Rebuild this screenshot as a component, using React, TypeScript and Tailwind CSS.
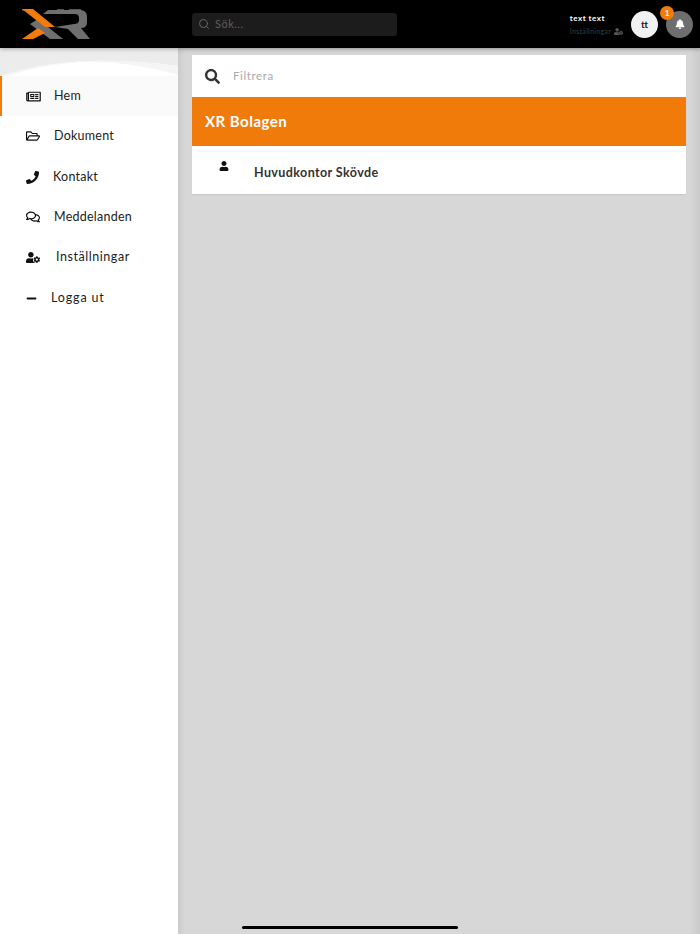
import { Search } from 'lucide-react';
import {
  FaBell,
  FaMinus,
  FaPhone,
  FaRegComments,
  FaRegFolderOpen,
  FaRegNewspaper,
  FaSearch,
  FaUser,
  FaUserCog,
} from 'react-icons/fa';

const font = "font-['Lato','Noto_Sans',sans-serif]";

function Logo() {
  // coordinates are page pixels, shifted by the viewBox origin
  return (
    <svg width="72" height="32" viewBox="20 8 72 32" className="block">
      <rect x="22" y="9" width="8" height="1.5" fill="#a85a12" />
      <rect x="57" y="9" width="7" height="1.5" fill="#555555" />
      <rect x="69" y="9" width="12" height="1.5" fill="#555555" />
      <polygon points="30,24 38,19 63,39 50,39" fill="#6f6f6f" />
      <polygon points="22,9 33,9 55,27 45,27" fill="#f27c0a" />
      <polygon points="22,39 38,28 45,33 33,39" fill="#f27c0a" />
      <path
        d="M43,14 L48,10 H80 Q87,10 87,17 V22 Q87,28 81,28 L90,39 H78 L68,29 L55,27 L74,24 Q79,24 79,20 V18 Q79,14 75,14 Z"
        fill="#6f6f6f"
      />
    </svg>
  );
}

function Header() {
  return (
    <header className="z-10 flex h-12 shrink-0 items-center bg-black shadow-[0_1px_4px_rgba(0,0,0,0.3)]">
      <div className="flex h-full w-[192px] shrink-0 items-start pt-[8px] pl-[20px]">
        <Logo />
      </div>
      <div className="flex h-[23px] w-[205px] items-center gap-[5px] rounded-[3px] bg-[#1c1c1c] pl-[6px]">
        <Search className="h-[12px] w-[12px] text-[#666666]" />
        <span className="text-[11px] tracking-[0.5px] text-[#5f5f5f]">Sök...</span>
      </div>
      <div className="ml-auto flex flex-col items-start pt-[1px]">
        <span className="text-[8px] leading-[12px] font-bold tracking-[0.5px] text-white">text text</span>
        <span className="mt-[1px] flex items-center gap-[3px] text-[7px] leading-[12px] tracking-[0.3px] text-[#3d3d3d]">
          Inställningar <FaUserCog className="h-[9px] w-[9px] text-[#555555]" />
        </span>
      </div>
      <div className="ml-[8px] flex h-[27px] w-[27px] items-center justify-center rounded-full bg-[#f1f1f1] text-[10px] font-bold text-[#222222]">
        tt
      </div>
      <div className="relative mr-[7px] ml-[8px] flex h-[27px] w-[27px] items-center justify-center rounded-full bg-[#6e6e6e]">
        <FaBell className="h-[10px] w-[10px] text-white" />
        <span className="absolute -top-[5px] -left-[6px] flex h-[14px] w-[14px] items-center justify-center rounded-full bg-[#f27c0a] text-[8px] font-bold text-white">
          1
        </span>
      </div>
    </header>
  );
}

const items = [
  { label: 'Dokument', icon: <FaRegFolderOpen className="h-[14px] w-[14px]" />, textClass: 'ml-[14px] tracking-[0.25px]', rowClass: '' },
  { label: 'Kontakt', icon: <FaPhone className="h-[13px] w-[13px]" />, textClass: 'ml-[13px] tracking-[0.25px]', rowClass: 'pt-[1px]' },
  { label: 'Meddelanden', icon: <FaRegComments className="h-[14px] w-[14px]" />, textClass: 'ml-[14px] tracking-[0.25px]', rowClass: '' },
  { label: 'Inställningar', icon: <FaUserCog className="h-[13px] w-[16px]" />, textClass: 'ml-[16px] tracking-[0.55px]', rowClass: '' },
  { label: 'Logga ut', icon: <FaMinus className="h-[11px] w-[11px]" />, textClass: 'ml-[11px] tracking-[0.85px]', rowClass: 'pt-[1px]' },
];

function Sidebar() {
  return (
    <aside className="flex w-[178px] shrink-0 flex-col bg-white">
      <svg viewBox="0 0 178 28" width="178" height="28" className="block">
        <path d="M0,0 H178 V18 Q135,12 85,13 Q40,15 0,28 Z" fill="#ececec" />
        <path d="M0,28 Q40,15 85,13 Q135,12 178,18 V27 Q135,14 90,14 Q40,15 0,31 Z" fill="#f5f5f5" />
      </svg>
      <div className="flex h-[40px] items-center border-l-[2px] border-[#f27c0a] bg-[#fafafa] pl-[24px] text-[12.5px] tracking-[0.25px] text-[#222222]">
        <FaRegNewspaper className="h-[13px] w-[15px] text-[#111111]" />
        <span className="ml-[13px]">Hem</span>
      </div>
      {items.map((item) => (
        <div key={item.label} className={`flex h-[40.4px] items-center pl-[26px] text-[12.5px] text-[#222222] ${item.rowClass}`}>
          <span className="flex w-[14px] items-center text-[#111111]">{item.icon}</span>
          <span className={item.textClass}>{item.label}</span>
        </div>
      ))}
    </aside>
  );
}

function Main() {
  return (
    <main className="relative min-w-0 flex-1 bg-[#d7d7d7] pt-[7px] pr-[14px] pl-[14px] shadow-[inset_6px_3px_6px_-4px_rgba(0,0,0,0.08)]">
      <div className="absolute top-0 right-0 bottom-0 w-[10px] bg-gradient-to-r from-transparent to-[#c9c9c9]" />
      <div className="relative bg-white shadow-[0_1px_1px_rgba(0,0,0,0.06)]">
        <div className="flex h-[42px] items-center pl-[13px]">
          <FaSearch className="h-[15px] w-[15px] text-[#333333]" />
          <span className="ml-[13px] text-[11.5px] tracking-[0.6px] text-[#aaaaaa]">Filtrera</span>
        </div>
        <div className="flex h-[49px] items-center bg-[#f07b0b] pl-[13px] text-[15px] font-bold tracking-[0.5px] text-white">
          XR Bolagen
        </div>
        <div className="h-[48px] pt-[5px] pl-[6px]">
          <div className="flex items-start border-t border-[#f5f5f5] pt-[9px]">
            <FaUser className="ml-[21px] h-[10px] w-[10px] text-[#111111]" />
            <span className="ml-[25px] pt-[3px] text-[12.5px] leading-[17px] font-bold tracking-[0.4px] text-[#333333]">
              Huvudkontor Skövde
            </span>
          </div>
        </div>
      </div>
    </main>
  );
}

export default function App() {
  return (
    <div className={`relative flex h-[934px] w-[700px] flex-col overflow-hidden ${font}`}>
      <Header />
      <div className="flex min-h-0 flex-1">
        <Sidebar />
        <Main />
      </div>
      <div className="absolute bottom-[5px] left-[242px] h-[3px] w-[216px] rounded-full bg-black" />
    </div>
  );
}
